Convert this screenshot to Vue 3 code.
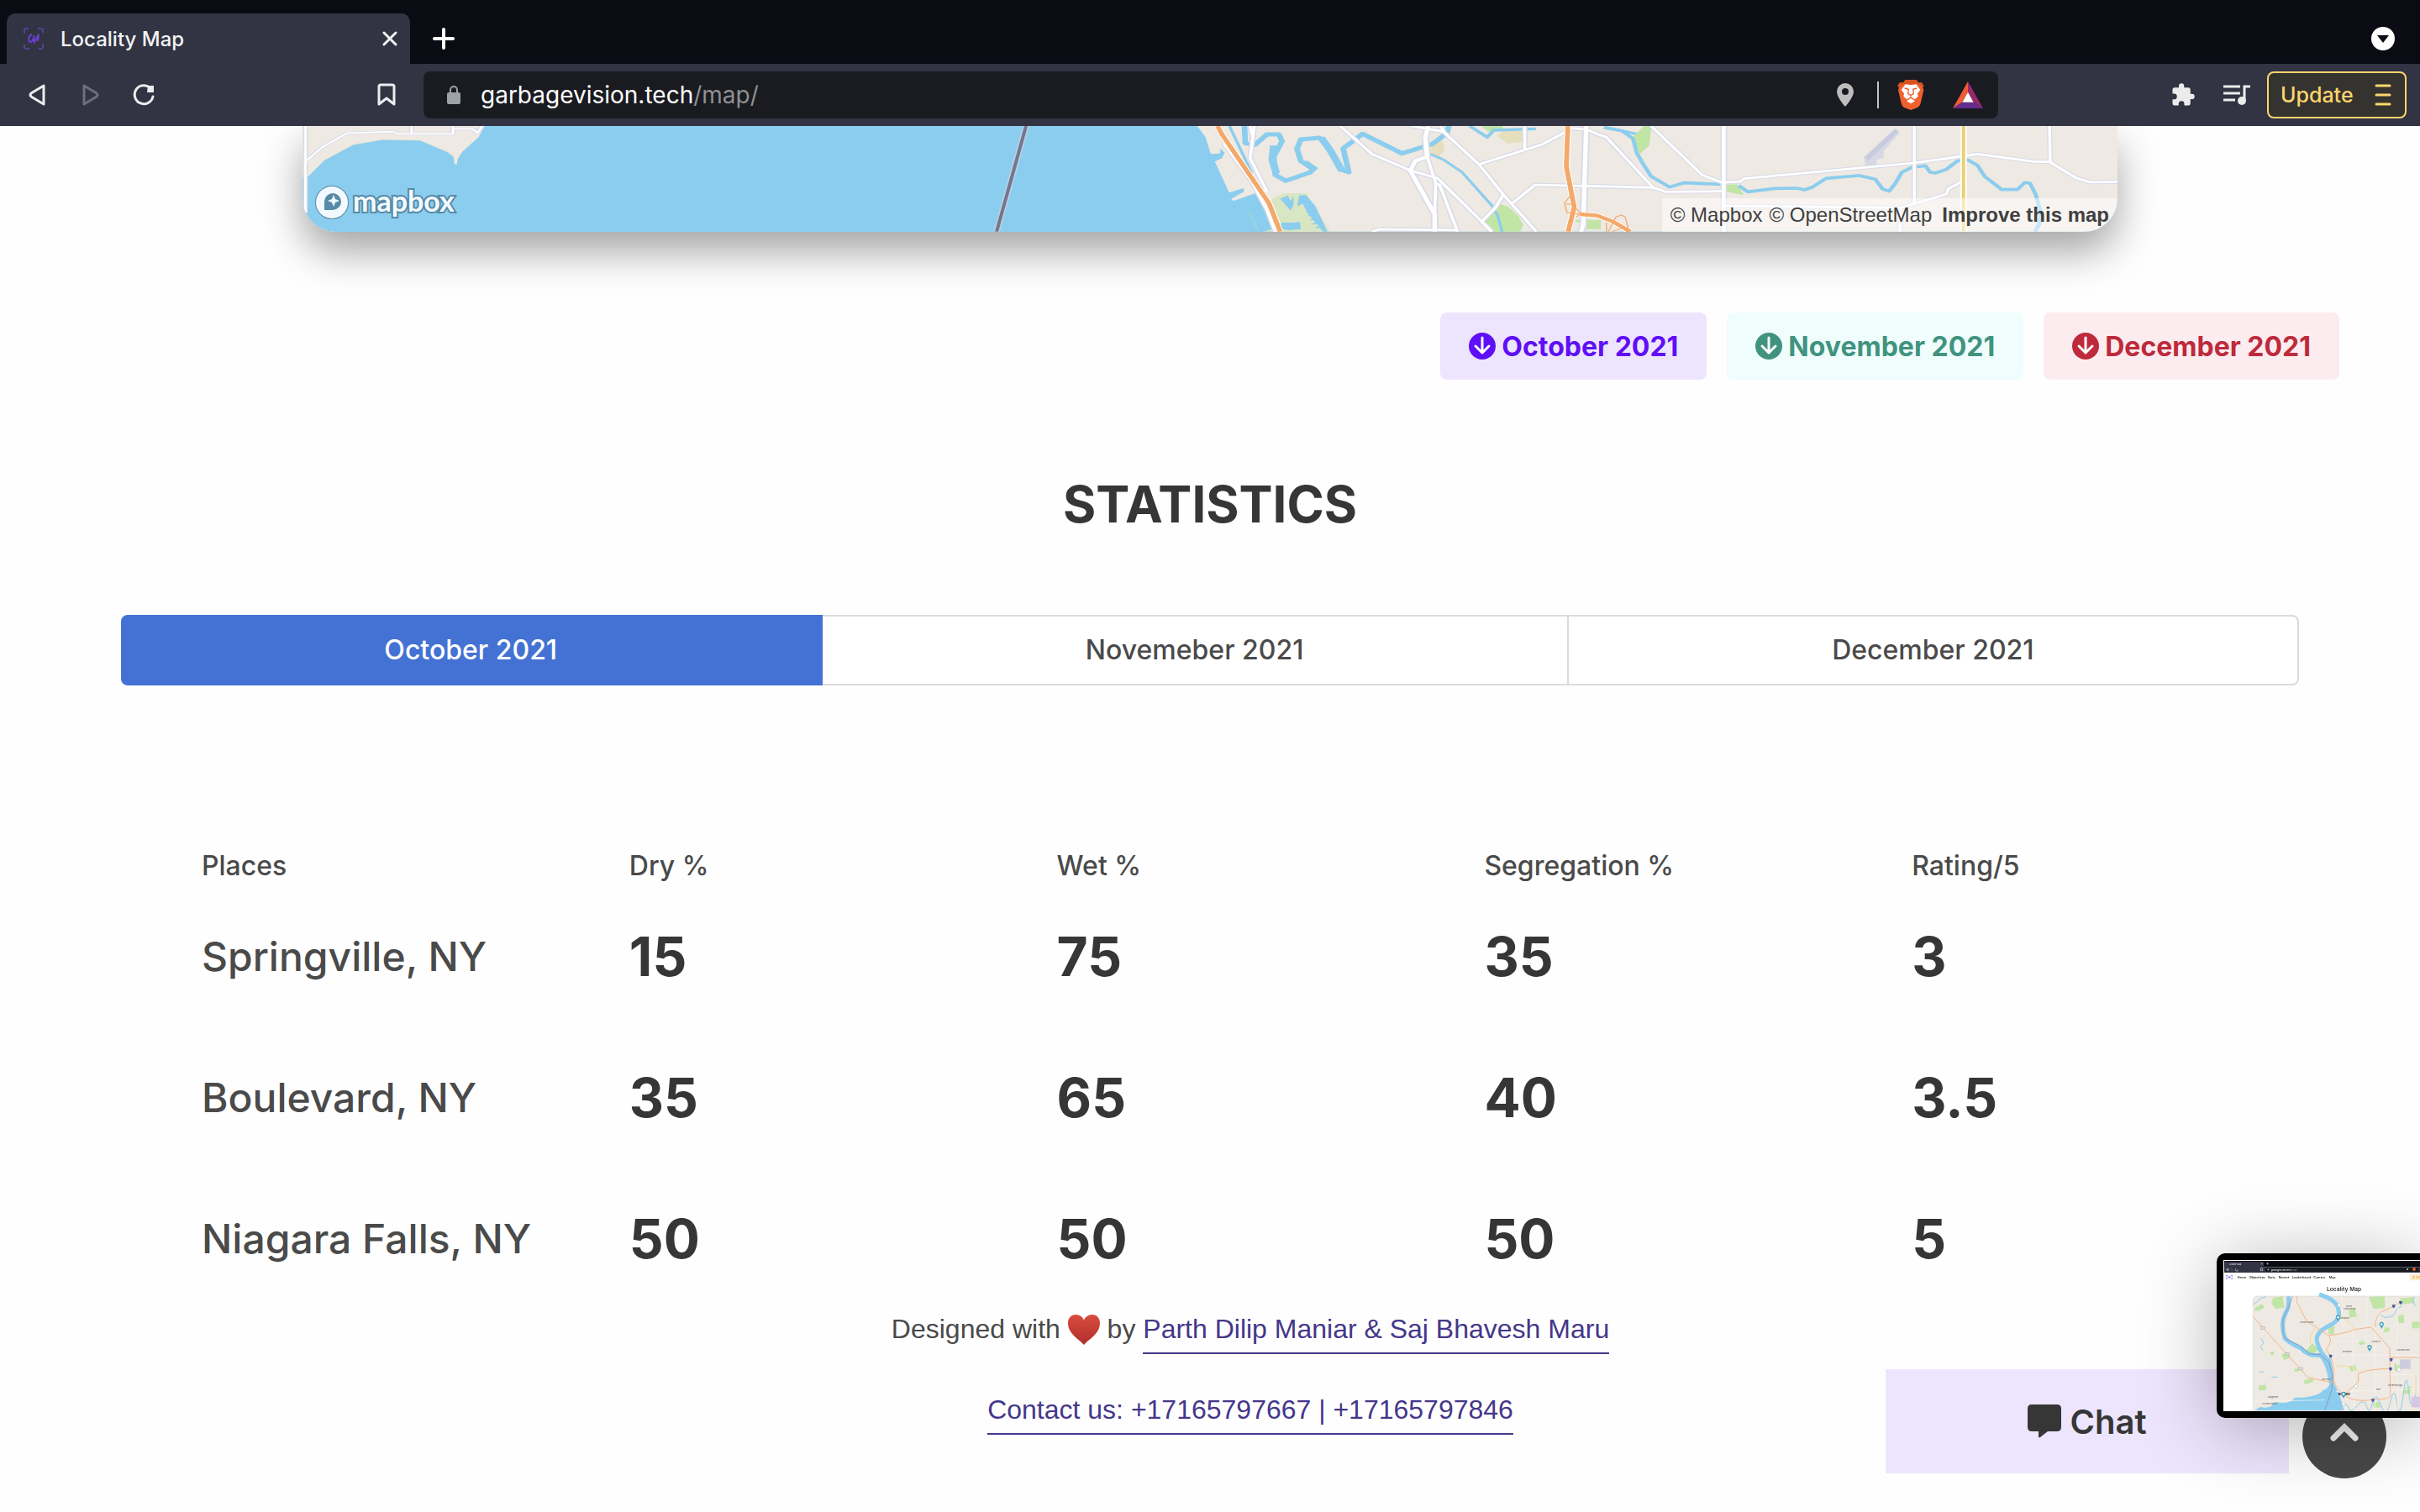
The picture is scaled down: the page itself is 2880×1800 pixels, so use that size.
<script setup>
import { ref } from 'vue'

const downloads = [
  { label: 'October 2021', tone: 'violet' },
  { label: 'November 2021', tone: 'teal' },
  { label: 'December 2021', tone: 'red' }
]

const months = ['October 2021', 'Novemeber 2021', 'December 2021']
const activeMonth = ref(0)

const columns = ['Places', 'Dry %', 'Wet %', 'Segregation %', 'Rating/5']
const rows = [
  { place: 'Springville, NY', values: ['15', '75', '35', '3'] },
  { place: 'Boulevard, NY', values: ['35', '65', '40', '3.5'] },
  { place: 'Niagara Falls, NY', values: ['50', '50', '50', '5'] }
]

const westRoads = [
  'M42 155L75 107 127 56 222 50 232 58 347 58 347 40 387 40 398 55 407 30',
  'M261 30V58',
  'M347 30V58',
  'M41 30V340'
]
const centreRoads = [
  'M795 30L880 130 985 190 1055 217 1200 407',
  'M1027 140L1050 235 1060 240 1108 407',
  'M1050 235L1047 345',
  'M985 30L1070 50 1165 167 1230 275 1318 407',
  'M1062 30L1072 50',
  'M1165 167L1335 95 1390 55 1410 38 1450 42 1505 70 1568 160',
  'M1230 275L1210 320 1172 372 1198 407',
  'M1255 305L1315 240 1568 248',
  'M1287 30V112',
  'M880 407L900 399 1108 402',
  'M566 30L555 145 600 265',
  'M555 30L560 60',
  'M485 92L560 230 600 330 622 407'
]
const centreMainRoads = [
  'M1030 30L1022 70 1027 140 995 155 982 190 1047 345V407',
  'M1451 30L1443 385 1437 407'
]
const eastRoads = [
  'M0 58L27 70 155 250 190 265 345 263',
  'M150 30L290 205 345 232 395 228 405 218 870 162 1045 130 1200 157 1243 158 1315 215 1355 231 1430 230',
  'M0 245L155 250',
  'M872 30V305',
  'M1243 30L1245 158',
  'M350 315L835 322 960 273 965 255 1000 230',
  'M835 322L832 407'
]

const previewLinks = [
  { x: 128, label: 'Home' },
  { x: 171, label: 'Objectives' },
  { x: 236, label: 'Stats' },
  { x: 275, label: 'Recent' },
  { x: 323, label: 'Leaderboard' },
  { x: 400, label: 'Camera' },
  { x: 455, label: 'Map' }
]
const previewPins = [[488, 268], [643, 293], [600, 375], [507, 542]]
const previewParks = [
  'M255 195l35-5 5 40-30 5-15-20z', 'M190 232l25-15 10 12-20 12-14 2z', 'M598 192l55-2 2 42-42 2z',
  'M527 240l20-8 8 30-28 4z', 'M708 197l48-4 4 20-50 6z', 'M700 260l22-6 2 30-20 2z',
  'M752 280h26v24h-26z', 'M285 400l20-12 14 18-24 12z', 'M372 385l24-28 22 22-20 16z',
  'M452 300l24-4-4 30-18-2z', 'M205 508l26-2v18l-26 2z', 'M365 490l32-8 2 12-30 10z',
  'M560 350l18-4 6 14-20 4z', 'M690 430l18 6-8 24-12-6z', 'M720 520l30-10-6 26-22 4z',
  'M525 440l24-6 4 20-18 6z', 'M610 570l24-4 6 20-24 2z', 'M330 450l14-4 4 12-14 2z',
  'M245 390l12-4 2 12-12 2z', 'M655 300l18 2-4 14-20 2z'
]
</script>

<template>
  <div class="browser">
    <header class="chrome">
      <div class="tab-strip">
        <div class="tab">
          <svg class="favicon" viewBox="0 0 24 26" fill="none" stroke="#55409a" stroke-width="2">
            <path d="M1 7V1h6M17 1h6v6M23 19v6h-6M7 25H1v-6" stroke-dasharray="5 1" />
            <path d="M10 8c-4 1-5 8-2 9 2 0 3-2 3-4M12 9l1 8 5-9-1 8" stroke="#6a3fd0" />
          </svg>
          <span class="tab-title">Locality Map</span>
          <button class="icon-button" aria-label="Close tab">
            <svg width="18" height="18" viewBox="0 0 18 18" fill="none" stroke="#f1f1f3" stroke-width="3" stroke-linecap="round"><path d="M2 2l14 14M16 2L2 16" /></svg>
          </button>
        </div>
        <button class="icon-button new-tab" aria-label="New tab">
          <svg width="26" height="26" viewBox="0 0 26 26" fill="none" stroke="#fff" stroke-width="4" stroke-linecap="round"><path d="M13 2v22M2 13h22" /></svg>
        </button>
        <button class="icon-button tab-search" aria-label="Search tabs">
          <svg width="28" height="28" viewBox="0 0 28 28"><circle cx="14" cy="14" r="14" fill="#fff" /><path d="M7 10h14l-7 9z" fill="#0b0b14" /></svg>
        </button>
      </div>

      <div class="toolbar">
        <div class="nav">
          <button class="icon-button" aria-label="Back">
            <svg width="22" height="28" viewBox="0 0 22 28" fill="none" stroke="#ececee" stroke-width="3" stroke-linejoin="round"><path d="M19 3v22L4 16q-2-2 0-4z" /></svg>
          </button>
          <button class="icon-button" aria-label="Forward">
            <svg width="22" height="28" viewBox="0 0 22 28" fill="none" stroke="#6d6f7c" stroke-width="3" stroke-linejoin="round"><path d="M3 3v22l15-9q2-2 0-4z" /></svg>
          </button>
          <button class="icon-button reload" aria-label="Reload">
            <svg width="28" height="28" viewBox="0 0 28 28" fill="none" stroke="#ececee" stroke-width="3" stroke-linecap="round"><path d="M25 16A11 11 0 1 1 21 5" /><path d="M19 3l7 0v8h-8z" fill="#ececee" stroke="none" /></svg>
          </button>
          <button class="icon-button bookmark" aria-label="Bookmark">
            <svg width="22" height="28" viewBox="0 0 22 28" fill="none" stroke="#ececee" stroke-width="3" stroke-linejoin="round"><path d="M4 2h14q2 0 2 2v21l-9-7-9 7V4q0-2 2-2z" /></svg>
          </button>
        </div>
        <div class="address">
          <svg width="16" height="22" viewBox="0 0 16 22"><rect y="8" width="16" height="14" rx="2" fill="#9da2a6" /><path d="M4 9V5a4 4 0 0 1 8 0v4" fill="none" stroke="#9da2a6" stroke-width="2" /></svg>
          <span class="url">garbagevision.tech<span class="url-path">/map/</span></span>
          <svg class="pin" width="20" height="28" viewBox="0 0 20 28"><path d="M10 0a10 10 0 0 0-10 10c0 7 10 18 10 18s10-11 10-18A10 10 0 0 0 10 0zm0 6a4 4 0 1 1 0 8 4 4 0 0 1 0-8z" fill="#bdbdbe" fill-rule="evenodd" /></svg>
          <span class="divider"></span>
          <svg class="brave" width="32" height="36" viewBox="0 0 94 108">
            <path d="M28 0h38l9 11 9-2 9 11-3 8 3 8-11 48q-3 11-11 15L47 108 23 99q-8-5-10-15L2 36l3-8-5-8 9-11 10 2z" fill="#f0602c" />
            <path d="M28 0h38l9 11 9-2 9 11-3 8-15-12H19L5 28 0 20 9 9l10 2z" fill="#d9531f" />
            <path d="M47 19l19-3 15 20-10 13 2 10-12 11-14-9-14 9-12-11 2-10L13 36l15-20z" fill="#fff" />
            <path d="M47 66l15 10-15 9-15-9z" fill="#fff" />
            <path d="M25 30l14 4-2 15 10 7 10-7-2-15 14-4M47 56v6" fill="none" stroke="#f0602c" stroke-width="4" />
          </svg>
          <svg class="bat" width="36" height="32" viewBox="0 0 108 96"><path d="M54 0L0 96l34-22 20-36z" fill="#f15a36" /><path d="M54 0l54 96-34-22-20-36z" fill="#96296a" /><path d="M0 96h108L74 74H34z" fill="#652d8e" /><path d="M54 38L34 74h40z" fill="#fff" /></svg>
        </div>
        <div class="tools">
          <button class="icon-button" aria-label="Extensions">
            <svg width="30" height="30" viewBox="0 0 24 24"><path d="M20.500 11H19V7a2 2 0 0 0-2-2h-4V3.500a2.500 2.500 0 0 0-5 0V5H4a2 2 0 0 0-2 2v3.800h1.500a2.700 2.700 0 0 1 0 5.400H2V20a2 2 0 0 0 2 2h3.800v-1.500a2.700 2.700 0 0 1 5.400 0V22H17a2 2 0 0 0 2-2v-4h1.500a2.500 2.500 0 0 0 0-5z" fill="#ececec" /></svg>
          </button>
          <button class="icon-button playlist" aria-label="Playlist">
            <svg width="32" height="26" viewBox="0 0 32 26" fill="none" stroke="#ececec" stroke-width="3"><path d="M0 3h20M0 11h20M0 19h14M25 20V3h7" /><circle cx="22" cy="20" r="5" fill="#ececec" stroke="none" /></svg>
          </button>
          <button class="update">
            Update
            <svg width="20" height="28" viewBox="0 0 20 28" stroke="#fbd56e" stroke-width="3" stroke-linecap="round"><path d="M2 3h16M2 14h16M2 25h16" /></svg>
          </button>
        </div>
      </div>
    </header>

    <main>
      <section class="map">
        <svg class="map-canvas" viewBox="0 0 2160 126" preserveAspectRatio="xMidYMax slice" fill="none" stroke-linejoin="round">
          <rect width="2160" height="126" fill="#8bcdee" />
          <g transform="matrix(.574 0 0 .3333 -20 -10)">
            <path d="M30 30H413L400 70 366 122 356 150 355 167H350L348 140 335 122 278 81 200 79 140 97 80 152 45 212H30z" fill="#eee9e2" />
            <path d="M45 212L80 152 140 97 200 79 278 81 335 122" stroke="#e9ecca" stroke-width="1" />
            <path v-for="d in westRoads" :key="'a' + d" :d="d" stroke="#d8dae8" stroke-width="10" />
            <path v-for="d in westRoads" :key="'b' + d" :d="d" stroke="#fff" stroke-width="5" />
            <path d="M1535 30L1474 407" stroke="#b2cfe6" stroke-width="14" />
            <path d="M1535 30L1474 407" stroke="#74768c" stroke-width="7" />
          </g>
          <g transform="matrix(.4464 0 0 .3333 880 -10)">
            <path d="M414 30L436 70 450 130 475 128 476 110 487 125 480 145 461 157 499 268 538 252V265L505 290 510 298 570 270 585 290 620 407H2900V30z" fill="#eee9e2" />
            <path d="M552 335L578 407" stroke="#bfe0b0" stroke-width="2" />
            <path d="M613 290L645 270H705L768 407H590L622 395z" fill="#d8e6c3" />
            <path d="M635 290l20-12 8 20 8-18v30l-8 22zM685 278l18-2 26 40 32 91h-12l-40-65-14-35-14 10zM650 330l8 46 30-3 2 25-30 4-26-5 4-22h20z" fill="#8bcdee" />
            <path d="M700 320l20-10M705 335l20-10M710 350l22-10M716 366l22-8M722 380l20-8M730 394l18-6" stroke="#8bcdee" stroke-width="5" />
            <path d="M1178 372L1220 308 1243 318 1270 352 1283 385 1275 407H1200z" fill="#c0e5a5" />
            <path d="M1422 365L1490 365V398H1452V378L1422 372zM1172 30H1228V42L1190 50z" fill="#c0e5a5" />
            <path d="M1213 65L1230 48H1280V87L1240 92zM1040 88L1068 78 1073 120 1055 142 1035 125z" fill="#e6dfbd" />
            <g stroke="#8bcdee">
              <path d="M500 30L560 200" stroke-width="8" />
              <path d="M540 30L542 92 568 97 600 60 632 60 640 85 618 140 622 205 650 226 715 196 725 182 690 155 680 112 690 78 740 72 768 115 795 185 818 195 803 110 855 58 960 128 1040 95 1080 55 1085 30" stroke-width="15" />
              <path d="M618 100L614 150 625 200M745 72L770 120 800 190M700 160L730 188" stroke-width="20" />
              <path d="M1035 130L1070 150 1120 195 1200 315 1215 350 1227 407" stroke-width="8" />
              <path d="M1140 30L1187 70 1205 45 1317 40" stroke-width="10" />
              <path d="M1500 35L1550 48 1590 60" stroke-width="10" />
            </g>
            <path v-for="d in centreRoads" :key="'a' + d" :d="d" stroke="#d8dae8" stroke-width="15" />
            <path v-for="d in centreMainRoads" :key="'a' + d" :d="d" stroke="#d8dae8" stroke-width="20" />
            <path v-for="d in centreRoads" :key="'b' + d" :d="d" stroke="#fff" stroke-width="8" />
            <path v-for="d in centreMainRoads" :key="'b' + d" :d="d" stroke="#fff" stroke-width="12" />
            <g stroke="#fff" stroke-width="18">
              <path d="M468 30L480 60 605 305 635 407M1402 30L1398 175 1419 320 1403 407M1435 345L1480 350 1520 370 1568 407" />
            </g>
            <g stroke="#f4a86a" stroke-width="13">
              <path d="M468 30L480 60 605 305 635 407M1402 30L1398 175 1419 320 1403 407M1435 345L1480 350 1520 370 1568 407" />
            </g>
            <path d="M1408 280L1393 305 1400 340 1437 345 1415 310 1397 308M1425 355L1440 338M1505 407V375M1510 407L1530 355 1545 348 1555 355 1565 407M1520 407L1545 395" stroke="#f4a86a" stroke-width="3" />
          </g>
          <g transform="matrix(.4337 0 0 .3333 1540 -10)">
            <path d="M100 70L130 30H150L145 100 118 130zM355 240L385 238 404 277 357 265z" fill="#c0e5a5" />
            <path d="M733 140L820 38 831 55 788 120V145L770 150 768 172H738z" fill="#d6d9e3" />
            <path d="M737 142L820 40 829 50 745 155z" fill="#c8cbe0" />
            <path d="M20 35L70 47 100 75 110 125 130 170 150 210 200 248 240 233 340 238M390 243L415 265 490 253 550 252 570 258 590 250 630 217 720 207 765 220 785 255 803 263 820 235 838 195 865 178 903 172 915 195 930 198 960 185 990 155 1020 152 1045 170 1065 210 1112 257 1155 257 1175 232 1190 235 1205 275 1220 340 1215 380 1203 407" stroke="#8bcdee" stroke-width="11" />
            <path v-for="d in eastRoads" :key="'a' + d" :d="d" stroke="#d8dae8" stroke-width="14" />
            <path d="M349 30V407" stroke="#d8dae8" stroke-width="18" />
            <path v-for="d in eastRoads" :key="'b' + d" :d="d" stroke="#fff" stroke-width="8" />
            <path d="M349 30V407" stroke="#fff" stroke-width="11" />
            <path d="M1007 30V407" stroke="#fff" stroke-width="18" />
            <path d="M1007 30V407" stroke="#ecd070" stroke-width="9" />
          </g>
        </svg>
        <a class="map-logo" href="#">
          <svg width="42" height="42" viewBox="0 0 42 42"><circle cx="21" cy="21" r="19" fill="#f3faff" stroke="#568aa6" stroke-width="2" /><path d="M12 30V20a10 10 0 1 1 10 10z" fill="#568aa6" /><path d="M23 12l2 5 5 2-5 2-2 5-2-5-5-2 5-2z" fill="#f3faff" /></svg>
          <span>mapbox</span>
        </a>
        <div class="attribution"><a href="#">© Mapbox</a><a href="#">© OpenStreetMap</a><a class="improve" href="#">Improve this map</a></div>
      </section>

      <div class="downloads">
        <button v-for="item in downloads" :key="item.label" class="download" :class="item.tone">
          <svg width="32" height="32" viewBox="0 0 32 32"><circle cx="16" cy="16" r="16" fill="currentColor" /><path d="M16 6v18M8 16l8 8 8-8" fill="none" stroke="#fff" stroke-width="3" stroke-linecap="round" stroke-linejoin="round" /></svg>
          {{ item.label }}
        </button>
      </div>

      <h1>STATISTICS</h1>

      <div class="months" role="tablist">
        <button
          v-for="(month, index) in months"
          :key="month"
          role="tab"
          class="month"
          :class="{ active: index === activeMonth }"
          :aria-selected="index === activeMonth"
          @click="activeMonth = index"
        >{{ month }}</button>
      </div>

      <table class="stats">
        <thead>
          <tr><th v-for="column in columns" :key="column" scope="col">{{ column }}</th></tr>
        </thead>
        <tbody>
          <tr v-for="row in rows" :key="row.place">
            <th scope="row">{{ row.place }}</th>
            <td v-for="(value, index) in row.values" :key="index">{{ value }}</td>
          </tr>
        </tbody>
      </table>
    </main>

    <footer>
      <p>
        Designed with
        <svg class="heart" width="38" height="36" viewBox="0 0 38 36">
          <defs><linearGradient id="heart-fill" x1="0" y1="0" x2="0" y2="1"><stop offset="0" stop-color="#dc4c40" /><stop offset="1" stop-color="#ad2f2a" /></linearGradient></defs>
          <path d="M19 36C13 29 0 23 0 10 0 4 4 0 9 0c5 0 9 3 10 7 1-4 5-7 10-7 5 0 9 4 9 10 0 13-13 19-19 26z" fill="url(#heart-fill)" />
        </svg>
        by <a href="#">Parth Dilip Maniar &amp; Saj Bhavesh Maru</a>
      </p>
      <p><a href="#">Contact us: +17165797667 | +17165797846</a></p>
    </footer>

    <button class="chat">
      <svg width="40" height="40" viewBox="0 0 40 40"><path d="M5 0h30q5 0 5 5v22q0 5-5 5H24l-9 7q-2 1-2-1v-6H5q-5 0-5-5V5q0-5 5-5z" fill="#363636" /></svg>
      Chat
    </button>
    <button class="to-top" aria-label="Back to top">
      <svg width="36" height="24" viewBox="0 0 36 24" fill="none" stroke="#f3f3f3" stroke-width="7" stroke-linecap="round" stroke-linejoin="miter"><path d="M5 18L18 5l13 13" /></svg>
    </button>

    <div class="preview">
      <svg class="preview-screen" viewBox="78 60 702 540" fill="none">
        <rect x="78" y="60" width="702" height="540" fill="#fff" />
        <rect x="81" y="63" width="699" height="22" fill="#0b0b14" />
        <rect x="81" y="85" width="699" height="20" fill="#323443" />
        <rect x="82" y="66" width="140" height="22" rx="3" fill="#323443" />
        <rect x="228" y="87" width="552" height="15" rx="3" fill="#1a1b20" />
        <path d="M87 70h6v6h-6z" stroke="#55409a" />
        <path d="M96 90l-8 4 8 4zM124 90a5 5 0 1 0 7 5M211 89h7v10l-3-3-4 3zM213 71l5 5M218 71l-5 5M232 73h7M236 70v7" stroke="#d8d8dc" stroke-width="2" />
        <path d="M106 90l7 4-7 4z" stroke="#6d6f7c" />
        <path d="M236 92h5v5h-5zM733 90h5v6h-5z" fill="#bbb" />
        <path d="M754 88h10v8l-5 4-5-4z" fill="#f0602c" />
        <path d="M774 98l6-10v10z" fill="#96296a" />
        <text x="99" y="77" class="tiny" fill="#eee">Locality Map</text>
        <text x="248" y="98" class="tiny url-small" fill="#fff">garbagevision.tech<tspan fill="#888">/map/</tspan></text>
        <path d="M88 119v-4h5M105 115h5v4M110 123v4h-5M93 127h-5v-4M93 121l4-2-1 5 4-5 1 5 4-5" stroke="#7a4ce0" stroke-width="2" />
        <text v-for="link in previewLinks" :key="link.label" :x="link.x" y="125" class="link">{{ link.label }}</text>
        <rect x="743" y="110" width="40" height="23" rx="2" fill="#fdebd0" />
        <path d="M753 124l5-7 4 4-6 4z" fill="#f5a623" /><text x="765" y="125" class="link badge">202</text>
        <text x="447" y="171" class="heading">Locality Map</text>
        <path d="M184 600V205q0-16 16-16H780V600z" fill="#eee9e2" stroke="#ddd" stroke-width="2" />
        <path v-for="d in previewParks" :key="d" :d="d" fill="#c0e5a5" />
        <path d="M185 218q12-4 18-14t28-12M212 340l10 15-12 16 10 12M640 256q10 12 30 8t28-30l18-10M760 192q-12 20 8 34M500 580q20-10 26 10t30-10 34 4 20-14 30 8 34-10 24 4 22-30 20-12 24 10M205 460h18M250 478h20" stroke="#8bcdee" stroke-width="3" />
        <path d="M310 190Q315 225 300 250 280 290 298 340 320 360 355 375 380 405 425 400 455 430 462 500M420 183Q480 200 488 235 500 275 455 295 405 320 412 350 420 390 455 420 462 450 466 500" stroke="#8bcdee" stroke-width="15" />
        <path d="M190 597l20-12q24 6 40-4 8-18 30-12 30 6 55-18 30 2 56-4 36-8 42-22 20-4 26-28h12l20 40 18 60z" fill="#8bcdee" />
        <path d="M325 190L308 235 290 270 292 325 305 345 350 365 385 395 425 398 455 425 466 465V520L440 597" stroke="#8a83a0" stroke-width="2" />
        <path d="M500 190L505 300M540 310L545 597M590 190L588 350M620 300V597M184 565L440 560M500 400H780M470 350H700M610 470H780M480 530L780 520M700 190V597" stroke="#f8f6f3" stroke-width="2" />
        <path d="M184 262L380 480 470 498M340 190V210L375 278 455 330M455 330Q530 318 545 308L605 300 672 375 674 545Q665 560 620 557M455 330Q470 350 445 380 478 420 472 490 480 520 520 550 560 570 620 557M620 300Q620 245 660 238L685 225 710 210M590 455Q640 448 672 448M672 408H780M560 465V495L510 540M560 465L590 455" stroke="#f8b585" stroke-width="3" />
        <path d="M405 305Q380 340 390 360M480 440Q515 430 560 455M500 255L545 305M765 470V597" stroke="#f0dc90" stroke-width="3" />
        <path d="M708 415h38v34h-38z" fill="#cccde0" /><path d="M750 548h30v38h-30z" fill="#d6c6e6" />
        <g fill="#4958a8"><path d="M455 398h12l-2 9-4 3-4-3zM680 220h12l-2 9-4 3-4-3zM705 207h12l-2 9-4 3-4-3zM671 411h12l-2 9-4 3-4-3zM669 444h12l-2 9-4 3-4-3zM606 556h12l-2 9-4 3-4-3z" /></g>
        <g fill="#fff" stroke="#999"><circle cx="492" cy="221" r="6" /><circle cx="552" cy="511" r="6" /><circle cx="705" cy="451" r="6" /><circle cx="507" cy="574" r="6" /></g>
        <g fill="#ddd" stroke="#888"><rect x="212" y="298" width="14" height="9" /><rect x="300" y="392" width="14" height="9" /><rect x="347" y="444" width="14" height="9" /></g>
        <g class="town">
          <text x="516" y="227">North</text><text x="506" y="238">Tonawanda</text><text x="496" y="270">awanda</text>
          <text x="607" y="355">Amherst</text><text x="503" y="389">Kenmore</text><text x="697" y="384">Williamsville</text>
          <text x="429" y="488">Fort Erie</text><text x="665" y="509">Cheektowaga</text><text x="238" y="551">Ridgeway</text>
          <text x="217" y="577">Crystal Beach</text><text x="624" y="524">East</text><text x="352" y="286">Grand Island</text>
          <text x="488" y="544" class="city">Buffalo</text>
        </g>
        <g v-for="pin in previewPins" :key="pin[0]" fill="#3f9fbd">
          <path :d="`M${pin[0]} ${pin[1] + 12}l-7-12a8 8 0 1 1 14 0z`" /><circle :cx="pin[0]" :cy="pin[1] - 3" r="4" fill="#fff" />
        </g>
      </svg>
    </div>
  </div>
</template>

<style>
html, body { background: #fefefe; }
body { margin: 0; }
</style>

<style scoped>
.browser {
  min-height: 100vh;
  overflow: hidden;
  box-sizing: border-box;
  font-family: Inter, "Liberation Sans", sans-serif;
  color: #4a4a4a;
}
button { border: 0; font: inherit; cursor: pointer; }
svg { display: block; flex: none; }
.icon-button { display: flex; padding: 0; background: none; }

.chrome { position: relative; z-index: 1; color: #f2f2f4; background: #323443; }
.tab-strip { display: flex; align-items: flex-end; height: 76px; padding: 0 30px 0 8px; background: #0b0b14; }
.tab {
  display: flex;
  align-items: center;
  box-sizing: border-box;
  width: 480px;
  height: 60px;
  padding: 0 15px 0 20px;
  border-radius: 10px 10px 0 0;
  background: #323443;
}
.favicon { width: 24px; height: 26px; }
.tab-title { flex: 1; margin-left: 20px; font-size: 24px; font-weight: 500; }
.new-tab { margin: 0 0 17px 27px; }
.tab-search { margin: 0 0 16px auto; }
.toolbar { display: flex; align-items: center; height: 74px; padding-right: 16px; }
.nav { display: flex; align-items: center; gap: 42px; box-sizing: border-box; width: 504px; padding: 0 33px; }
.reload { margin-left: -4px; }
.bookmark { margin-left: auto; }
.address {
  display: flex;
  flex: 1;
  align-items: center;
  box-sizing: border-box;
  height: 56px;
  padding: 0 18px 0 28px;
  border-radius: 8px;
  background: #1a1b20;
}
.url { margin-left: 24px; font-size: 28px; color: #fff; }
.url-path { color: #8f9092; }
.pin { margin-left: auto; }
.divider { width: 2px; height: 32px; margin: 0 22px 0 28px; background: #c4c4c6; }
.bat { margin-left: 34px; }
.tools { display: flex; align-items: center; margin-left: 205px; }
.playlist { margin: 0 20px 0 33px; }
.update {
  display: flex;
  align-items: center;
  justify-content: space-between;
  box-sizing: border-box;
  width: 166px;
  height: 56px;
  padding: 0 16px 0 14px;
  border: 2px solid #fbd56e;
  border-radius: 8px;
  font-size: 25px;
  font-weight: 500;
  color: #fbd56e;
  background: #35332f;
}

.map {
  position: relative;
  width: 75%;
  height: 126px;
  margin: 0 auto;
  border-radius: 0 0 40px 40px;
  box-shadow: 0 24px 48px rgba(0, 0, 0, .35);
  overflow: hidden;
}
.map-canvas { width: 100%; height: 100%; }
.map-logo {
  position: absolute;
  left: 14px;
  bottom: 14px;
  display: flex;
  align-items: center;
  gap: 4px;
  font: 700 34px/36px Lato, sans-serif;
  color: #f3faff;
  text-decoration: none;
  -webkit-text-stroke: 4px #568aa6;
  paint-order: stroke fill;
}
.map-logo span { padding-bottom: 4px; }
.attribution {
  position: absolute;
  right: 0;
  bottom: 0;
  display: flex;
  gap: 8px;
  padding: 0 10px;
  font: 24px/40px "Liberation Sans", Arial, sans-serif;
  background: rgba(255, 255, 255, .5);
}
.attribution a { color: #404040; text-decoration: none; }
.attribution .improve { margin-left: 4px; font-weight: 700; }

.downloads { display: flex; justify-content: flex-end; gap: 24px; margin: 96px 96px 112px; }
.download {
  display: flex;
  align-items: center;
  gap: 7px;
  height: 80px;
  padding: 0 34px;
  border-radius: 8px;
  font-size: 32px;
  font-weight: 700;
}
.violet { color: #5f0ff5; background: #ede5fd; }
.teal { color: #41937f; background: #effdfc; }
.red { color: #bd2a3b; background: #fcecef; }

h1 { margin: 0 0 96px; font-size: 60px; font-weight: 700; line-height: 72px; text-align: center; color: #363636; }

.months { display: flex; margin: 0 144px 190px; }
.month {
  flex: 1 1 auto;
  box-sizing: border-box;
  height: 84px;
  padding: 0 32px 2px;
  border: 2px solid #dbdbdb;
  border-left-width: 0;
  font-size: 32px;
  font-weight: 500;
  color: #4a4a4a;
  background: #fff;
}
.month:first-child { border-radius: 8px 0 0 8px; }
.month:last-child { border-radius: 0 8px 8px 0; }
.month.active { border-color: #4472d4; color: #fff; background: #4472d4; }

.stats { width: calc(100% - 336px); margin: 0 120px 0 216px; border-collapse: collapse; table-layout: fixed; text-align: left; }
.stats th, .stats td { padding: 0 0 0 24px; white-space: nowrap; }
.stats thead th { height: 48px; font-size: 32px; font-weight: 500; }
.stats tbody th { height: 168px; font-size: 48px; font-weight: 500; }
.stats td { font-size: 64px; font-weight: 700; color: #363636; }

footer { padding: 0 0 72px 96px; font: 32px/48px "Liberation Sans", Arial, sans-serif; text-align: center; }
footer p { margin: 0 0 48px; }
footer a { padding-bottom: 10px; border-bottom: 2px solid #44378a; color: #44378a; text-decoration: none; }
.heart { display: inline-block; vertical-align: -8px; }

.chat {
  position: fixed;
  right: 156px;
  bottom: 46px;
  display: flex;
  align-items: center;
  justify-content: center;
  gap: 10px;
  width: 480px;
  height: 124px;
  font-size: 40px;
  font-weight: 600;
  color: #363636;
  background: #ede5fd;
}
.to-top {
  position: fixed;
  right: 40px;
  bottom: 40px;
  display: flex;
  justify-content: center;
  width: 100px;
  height: 100px;
  padding: 34px 0 0;
  border-radius: 50%;
  background: #484848;
}
.preview {
  position: fixed;
  right: 0;
  bottom: 112px;
  border: 8px solid #000;
  border-right: 0;
  border-radius: 10px 0 0 10px;
  box-shadow: 0 12px 90px rgba(0, 0, 0, .3);
}
.preview-screen { width: 234px; height: 180px; font-family: Inter, sans-serif; }
.tiny { font-size: 7px; }
.url-small { font-size: 8px; }
.link { font-size: 11px; font-weight: 600; fill: #333; }
.badge { fill: #f5a623; }
.heading { font-size: 20px; font-weight: 600; fill: #363636; }
.town { font-size: 8px; fill: #555; }
.city { font-size: 12px; font-weight: 700; fill: #222; }
</style>
